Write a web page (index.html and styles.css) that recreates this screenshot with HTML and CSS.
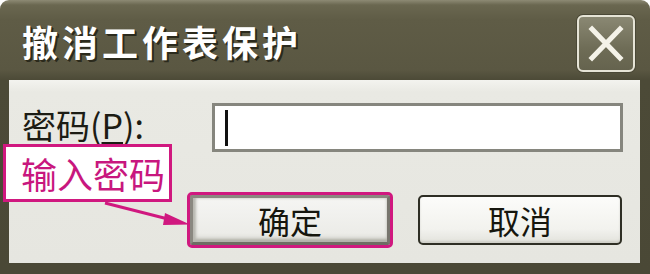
FILE: index.html
```html
<!DOCTYPE html>
<html lang="zh-CN">
<head>
<meta charset="utf-8">
<title>撤消工作表保护</title>
<link rel="stylesheet" href="styles.css">
</head>
<body>
<div class="window">
  <div class="titlebar">
    <span class="title">撤消工作表保护</span>
    <button class="close" aria-label="关闭">
      <svg width="54" height="53" viewBox="0 0 54 53">
        <path d="M13 12 L41 41 M41 12 L13 41" stroke="#f4f2e8" stroke-width="5" stroke-linecap="square"/>
      </svg>
    </button>
  </div>
  <div class="client">
    <div class="row field">
      <label class="label">密码(<u>P</u>):</label>
      <div class="input"><span class="caret"></span></div>
    </div>
    <div class="row actions">
      <button class="btn btn-ok">确定</button>
      <button class="btn btn-cancel">取消</button>
    </div>
  </div>
  <div class="callout">输入密码</div>
  <svg class="arrow" width="650" height="274" viewBox="0 0 650 274">
    <line x1="105" y1="203" x2="168" y2="219" stroke="#d0187f" stroke-width="3"/>
    <polygon points="190,224.5 165,213 163,225" fill="#d0187f"/>
  </svg>
</div>
</body>
</html>
```

FILE: styles.css
```css
* { box-sizing: border-box; }

body {
  margin: 0;
  background: #ffffff;
  font-family: "Noto Sans CJK SC", "Noto Sans", sans-serif;
}

.window {
  position: relative;
  width: 650px;
  height: 274px;
  display: flex;
  flex-direction: column;
  padding: 0 10px 11px 9px;
  border-radius: 9px 9px 0 0;
  background: linear-gradient(to bottom, #8d8a74 0, #6a6750 5px, #5f5c46 20px, #5a5742 70px, #4c4a37 80px, #4a4836 100%);
}

.titlebar {
  height: 80px;
  flex: none;
  display: flex;
  align-items: center;
  justify-content: space-between;
  padding: 0 5px 0 13px;
}

.title {
  color: #ffffff;
  font-size: 36px;
  font-weight: bold;
  letter-spacing: 4px;
  line-height: 1;
  margin-top: 2px;
  text-shadow: 2px 2px 0 #2b2a1c, 1px 1px 0 #2b2a1c;
}

.close {
  width: 58px;
  height: 57px;
  margin-top: 7px;
  padding: 0;
  display: flex;
  align-items: center;
  justify-content: center;
  border: 2px solid #e6e4d6;
  border-radius: 6px;
  background: linear-gradient(to bottom, #8a8873, #6e6c56 60%, #65634e);
  box-shadow: 0 0 0 1px #4a4836;
}

.client {
  flex: 1;
  display: flex;
  flex-direction: column;
  padding: 23px 17px 0 13px;
  background: linear-gradient(to bottom, #f3f3ef 0, #e9e9e3 12px, #e6e6e0 100%);
}

.row { display: flex; }

.field {
  align-items: center;
  height: 49px;
}

.label {
  width: 190px;
  flex: none;
  font-size: 34px;
  line-height: 1;
  color: #1c1c14;
  margin-top: -6px;
}

.label u { text-underline-offset: 3px; }

.input {
  flex: 1;
  height: 49px;
  display: flex;
  align-items: center;
  padding-left: 10px;
  background: #ffffff;
  border: 3px solid #86867e;
}

.caret {
  width: 3px;
  height: 36px;
  background: #111111;
}

.actions {
  justify-content: flex-end;
  gap: 28px;
  margin-top: 43px;
  padding-right: 1px;
}

.btn {
  height: 50px;
  padding: 0;
  font-family: "Noto Sans CJK SC", "Noto Sans", sans-serif;
  font-size: 32px;
  line-height: 1;
  color: #16160e;
}

.btn-ok {
  width: 200px;
  border: 3px solid #8a8880;
  border-bottom-color: #6e6c64;
  border-right-color: #77756d;
  border-radius: 2px;
  background: linear-gradient(to bottom, #f5f5f3, #ecece8 80%, #d8d8d2);
  box-shadow: inset 3px 0 3px #b8b8b0, inset 0 -3px 3px #b0b0a8;
  outline: 3px solid #d0187f;
}

.btn-cancel {
  width: 204px;
  border: 2px solid #2e2e24;
  border-radius: 5px;
  background: linear-gradient(to bottom, #fcfcfa, #f2f2ee 70%, #e2e2dc);
  box-shadow: inset 0 -2px 2px #cfcfc8;
}

.callout {
  position: absolute;
  left: 3px;
  top: 144px;
  width: 169px;
  height: 58px;
  display: flex;
  align-items: center;
  padding-left: 15px;
  background: #ffffff;
  border: 3px solid #d0187f;
  color: #c8177e;
  font-size: 36px;
  line-height: 1;
}

.arrow {
  position: absolute;
  left: 0;
  top: 0;
  pointer-events: none;
}
```
